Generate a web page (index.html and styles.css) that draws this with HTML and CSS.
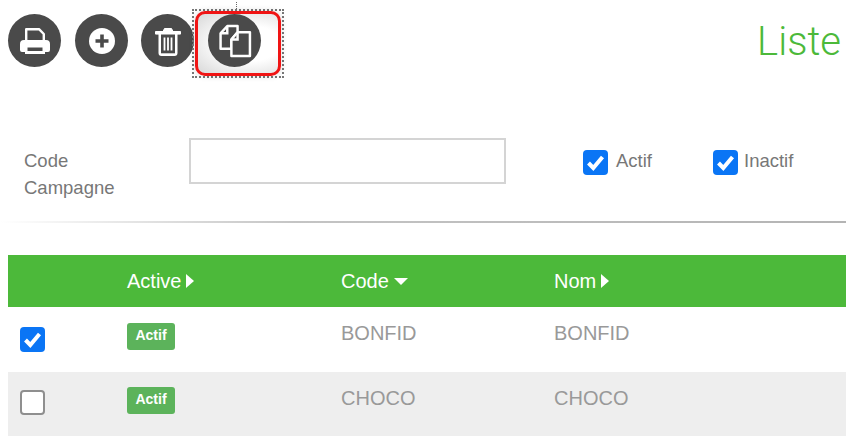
FILE: index.html
```html
<!DOCTYPE html>
<html lang="fr">
<head>
  <meta charset="UTF-8">
  <title>Liste</title>
  <link rel="stylesheet" href="styles.css">
</head>
<body>
  <div class="toolbar">
    <button class="tool-btn" aria-label="Imprimer">
      <svg viewBox="0 0 32 32" width="32" height="32">
        <path d="M7.200 16V4.200H20l4.800 4.800V16" fill="none" stroke="#fff" stroke-width="2.400" stroke-linejoin="round"/>
        <path d="M5 15h22a4 4 0 0 1 4 4v6a2 2 0 0 1-2 2h-3v2H6v-2H3a2 2 0 0 1-2-2v-6a4 4 0 0 1 4-4z" fill="#fff"/>
        <path d="M8.500 22.500h15v3.500h-15z" fill="#4a4a4a"/>
      </svg>
    </button>
    <button class="tool-btn" aria-label="Ajouter">
      <svg viewBox="0 0 32 32" width="32" height="32">
        <circle cx="16" cy="16" r="13" fill="#fff"/>
        <path d="M16 9.500v13M9.500 16h13" stroke="#4a4a4a" stroke-width="3.600"/>
      </svg>
    </button>
    <button class="tool-btn" aria-label="Supprimer">
      <svg viewBox="0 0 32 32" width="32" height="32">
        <path d="M3.500 6.500h25v2.600h-25zM11 6.500l1.500-3h7l1.500 3" fill="#fff" stroke="#fff" stroke-width="1" stroke-linejoin="round"/>
        <path d="M6.500 9v19a3 3 0 0 0 3 3h13a3 3 0 0 0 3-3V9z" fill="#fff"/>
        <path d="M9 9.500h14v18.800H9z" fill="#4a4a4a"/>
        <path d="M12.500 12.500v13M16 12.500v13M19.500 12.500v13" stroke="#fff" stroke-width="1.800"/>
      </svg>
    </button>
    <div class="highlight">
      <button class="tool-btn" aria-label="Dupliquer">
        <svg viewBox="0 0 33 33" width="34" height="34">
          <path d="M9 2L2.500 9v15H13v-9l6-7V2z" fill="#4a4a4a" stroke="#fff" stroke-width="2.400" stroke-linejoin="round"/>
          <path d="M9 2v7H2.500" fill="none" stroke="#fff" stroke-width="2.400"/>
          <path d="M19 8h12v23H13V15z" fill="#4a4a4a" stroke="#fff" stroke-width="2.400" stroke-linejoin="round"/>
          <path d="M19 8v7h-6" fill="none" stroke="#fff" stroke-width="2.400"/>
        </svg>
      </button>
      <span class="selection"></span>
      <span class="selection-handle"></span>
    </div>
    <h1 class="title">Liste</h1>
  </div>

  <div class="filters">
    <label class="filter-label" for="code">Code<br>Campagne</label>
    <input class="filter-input" id="code" type="text">
    <label class="check check-actif"><input type="checkbox" checked>Actif</label>
    <label class="check"><input type="checkbox" checked>Inactif</label>
  </div>

  <hr class="divider">

  <table class="list">
    <thead>
      <tr>
        <th class="col-check"></th>
        <th class="col-active">Active<span class="arrow-right"></span></th>
        <th class="col-code">Code<span class="arrow-down"></span></th>
        <th>Nom<span class="arrow-right"></span></th>
      </tr>
    </thead>
    <tbody>
      <tr>
        <td class="col-check"><input type="checkbox" checked></td>
        <td><span class="badge">Actif</span></td>
        <td>BONFID</td>
        <td>BONFID</td>
      </tr>
      <tr class="even">
        <td class="col-check"><input type="checkbox"></td>
        <td><span class="badge">Actif</span></td>
        <td>CHOCO</td>
        <td>CHOCO</td>
      </tr>
    </tbody>
  </table>
</body>
</html>
```

FILE: styles.css
```css
html, body {
  height: 100%;
}
body {
  margin: 0;
  overflow: hidden;
  background: #fff;
  color: #777;
  font-family: 'Liberation Sans', Arial, sans-serif;
  font-size: 18.5px;
}
.toolbar {
  display: flex;
  align-items: flex-start;
  height: 138px;
  padding: 14px 0 0 8px;
  box-sizing: border-box;
}
.tool-btn {
  width: 53px;
  height: 53px;
  margin-right: 14px;
  padding: 0;
  border: none;
  border-radius: 50%;
  background: #4a4a4a;
  display: flex;
  align-items: center;
  justify-content: center;
  flex-shrink: 0;
}
.tool-btn:nth-child(2) {
  margin-right: 13px;
}
.highlight {
  position: relative;
}
.highlight .tool-btn {
  margin-right: 0;
  position: relative;
  z-index: 1;
}
.selection {
  position: absolute;
  left: -16px;
  top: -5px;
  width: 92px;
  height: 69px;
  box-sizing: border-box;
  border: 2px dotted #777;
}
.selection::after {
  content: "";
  position: absolute;
  left: 1px;
  top: 0;
  width: 86px;
  height: 65px;
  box-sizing: border-box;
  border: 3px solid #f01414;
  border-radius: 10px;
  background: radial-gradient(ellipse at 65% 50%, #fff 42%, #d8d8d8 100%);
  box-shadow: 0 0 6px rgba(0, 0, 0, 0.15);
}
.selection-handle {
  position: absolute;
  left: 28px;
  top: -12px;
  height: 7px;
  border-left: 1px dotted #666;
}
.title {
  margin: 1px 0 0 auto;
  padding-right: 5px;
  color: #4cb93a;
  font-family: Roboto, sans-serif;
  font-size: 40px;
  font-weight: 300;
  line-height: 54px;
}
.filters {
  display: flex;
  align-items: flex-start;
  height: 83px;
  padding-left: 24px;
}
.filter-label {
  width: 165px;
  margin-top: 9px;
  line-height: 27px;
}
.filter-input {
  width: 317px;
  height: 46px;
  box-sizing: border-box;
  border: 2px solid #d4d4d4;
  background: #fff;
}
.check {
  display: flex;
  align-items: flex-start;
  margin-left: 77px;
  padding-top: 12px;
  line-height: 22px;
}
.check-actif {
  width: 53px;
}
.check + .check {
  margin-left: 77px;
}
input[type="checkbox"] {
  appearance: none;
  width: 25px;
  height: 25px;
  margin: 0 6px 0 0;
  box-sizing: border-box;
  border: 2px solid #8f8f8f;
  border-radius: 4px;
  background: #fff;
  flex-shrink: 0;
}
.check-actif input[type="checkbox"] {
  margin-right: 8px;
}
input[type="checkbox"]:checked {
  border: none;
  background-color: #0a75f5;
  background-image: url("data:image/svg+xml,%3Csvg xmlns='http://www.w3.org/2000/svg' viewBox='0 0 25 25'%3E%3Cpath d='M5.500 13l4.800 5L19.500 7' fill='none' stroke='%23fff' stroke-width='4'/%3E%3C/svg%3E");
}
.divider {
  height: 2px;
  margin: 0;
  border: none;
  background: linear-gradient(90deg, #fff 0%, #c4c4c4 35%, #b4b4b4 100%);
}
.list {
  width: calc(100% - 8px);
  margin: 32px 0 0 8px;
  border-collapse: collapse;
  color: #999;
  font-size: 20px;
}
.list th {
  height: 52px;
  padding: 0;
  background: #4cb93a;
  color: #fff;
  font-weight: 400;
  text-align: left;
}
.list td {
  height: 65px;
  padding: 15px 0 0;
  box-sizing: border-box;
  vertical-align: top;
}
.list .col-check {
  width: 119px;
}
.list td.col-check {
  padding: 20px 0 0 12px;
}
.list .even td.col-check {
  padding-top: 18px;
}
.col-active {
  width: 214px;
}
.col-code {
  width: 213px;
}
.even td {
  background: #eee;
}
.badge {
  display: inline-block;
  width: 48px;
  height: 27px;
  margin-top: 1px;
  border-radius: 3px;
  background: #5cb35b;
  color: #fff;
  font-size: 14px;
  font-weight: 700;
  line-height: 24px;
  text-align: center;
  vertical-align: top;
}
.even .badge {
  margin-top: 0;
}
.arrow-right {
  display: inline-block;
  margin-left: 5px;
  border-left: 8px solid #fff;
  border-top: 7px solid transparent;
  border-bottom: 7px solid transparent;
}
.arrow-down {
  display: inline-block;
  margin-left: 5px;
  vertical-align: 3px;
  border-top: 7px solid #fff;
  border-left: 7px solid transparent;
  border-right: 7px solid transparent;
}
```
